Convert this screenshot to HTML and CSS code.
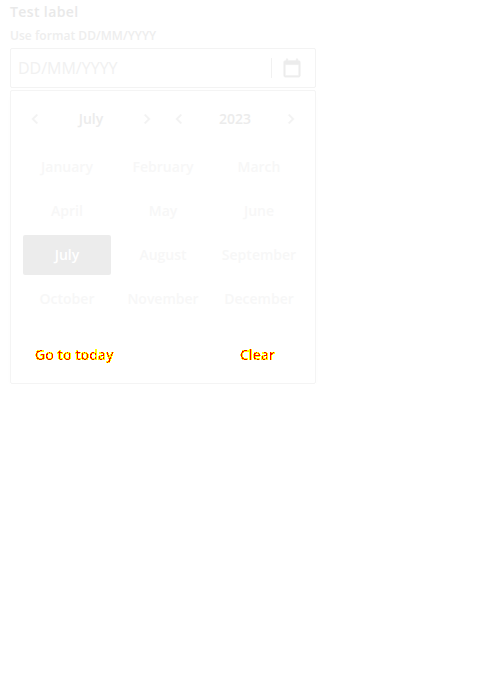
FILE: index.html
```
<!DOCTYPE html>
<html lang="en">
<head>
<meta charset="utf-8">
<title>Date picker</title>
<link rel="stylesheet" href="styles.css">
</head>
<body>
<svg class="defs" width="0" height="0" aria-hidden="true">
  <filter id="two-tone" color-interpolation-filters="sRGB" x="-5%" y="-5%" width="110%" height="110%">
    <feColorMatrix values="0 0 0 0 1  0 0 0 -1 1  0 0 0 0 0  0 0 0 1 0"/>
    <feComponentTransfer>
      <feFuncG type="discrete" tableValues="0 0 0 1 1 1 1 1 1 1 1 1 1 1 1 1"/>
      <feFuncA type="discrete" tableValues="0 1 1 1 1 1 1 1 1 1 1 1 1 1 1 1"/>
    </feComponentTransfer>
  </filter>
</svg>
<main class="field">
  <label class="label">Test label</label>
  <div class="hint">Use format DD/MM/YYYY</div>
  <div class="input">
    <span class="placeholder">DD/MM/YYYY</span>
    <span class="divider"></span>
    <svg class="calendar" viewBox="0 0 24 24"><path d="M20 3h-1V1h-2v2H7V1H5v2H4c-1.1 0-2 .9-2 2v16c0 1.1.9 2 2 2h16c1.1 0 2-.9 2-2V5c0-1.100-.9-2-2-2zm0 18H4V8h16v13z"/></svg>
  </div>
  <section class="popup">
    <header class="nav">
      <div class="switcher">
        <svg class="arrow" viewBox="0 0 24 24"><path d="M15.410 7.410 14 6l-6 6 6 6 1.410-1.410L10.830 12z"/></svg>
        <span>July</span>
        <svg class="arrow" viewBox="0 0 24 24"><path d="M10 6 8.590 7.410 13.170 12l-4.580 4.590L10 18l6-6z"/></svg>
      </div>
      <div class="switcher">
        <svg class="arrow" viewBox="0 0 24 24"><path d="M15.410 7.410 14 6l-6 6 6 6 1.410-1.410L10.830 12z"/></svg>
        <span>2023</span>
        <svg class="arrow" viewBox="0 0 24 24"><path d="M10 6 8.590 7.410 13.170 12l-4.580 4.590L10 18l6-6z"/></svg>
      </div>
    </header>
    <div class="months">
      <span>January</span><span>February</span><span>March</span>
      <span>April</span><span>May</span><span>June</span>
      <span class="selected">July</span><span>August</span><span>September</span>
      <span>October</span><span>November</span><span>December</span>
    </div>
    <footer class="actions"><span class="today">Go to today</span><span class="clear">Clear</span></footer>
  </section>
</main>
</body>
</html>
```
FILE: styles.css
```
* { box-sizing: border-box; }
body { margin: 0; background: #fff; font-family: "Open Sans", "Noto Sans", sans-serif; font-size: 14px; font-weight: 600; line-height: 20px; color: #ececec; }
.defs { position: absolute; }
.field { width: 306px; margin-left: 10px; padding-top: 2px; display: flex; flex-direction: column; }
.label { color: #e9e9e9; letter-spacing: .38px; }
.hint { margin-top: 6px; font-size: 12px; line-height: 16px; letter-spacing: .04px; color: #eee; }
.input { margin-top: 4px; height: 40px; border: 1px solid #f3f3f3; border-radius: 2px; padding: 0 13px 0 7px; display: flex; align-items: center; }
.placeholder { flex: 1; font-size: 16px; font-weight: 400; color: #f1f1f1; }
.divider { width: 1px; height: 20px; background: #f1f1f1; margin-right: 10px; }
.calendar { width: 20px; height: 20px; fill: #ececec; stroke: #f1f1f1; stroke-width: .6; }
.popup { margin-top: 2px; height: 294px; border: 1px solid #f4f4f4; border-radius: 2px; box-shadow: 0 4px 10px rgba(0,0,0,.012); padding: 8px 8px 0; }
.nav { display: flex; height: 40px; }
.switcher { width: 144px; padding: 0 6px; display: flex; align-items: center; justify-content: space-between; }
.arrow { width: 20px; height: 20px; fill: #f2f2f2; stroke: #f6f6f6; stroke-width: .5; }
.months { margin: 8px 4px 0; display: grid; grid-template-columns: repeat(3, 88px); gap: 4px 8px; }
.months span { height: 40px; line-height: 40px; text-align: center; color: #f7f7f7; }
.months .selected { background: #ececec; color: #fff; border-radius: 2px; }
.actions { margin-top: 16px; display: flex; justify-content: space-between; line-height: 40px; padding: 0 32px 0 16px; color: #000; }
.actions span { filter: url(#two-tone); }
```
